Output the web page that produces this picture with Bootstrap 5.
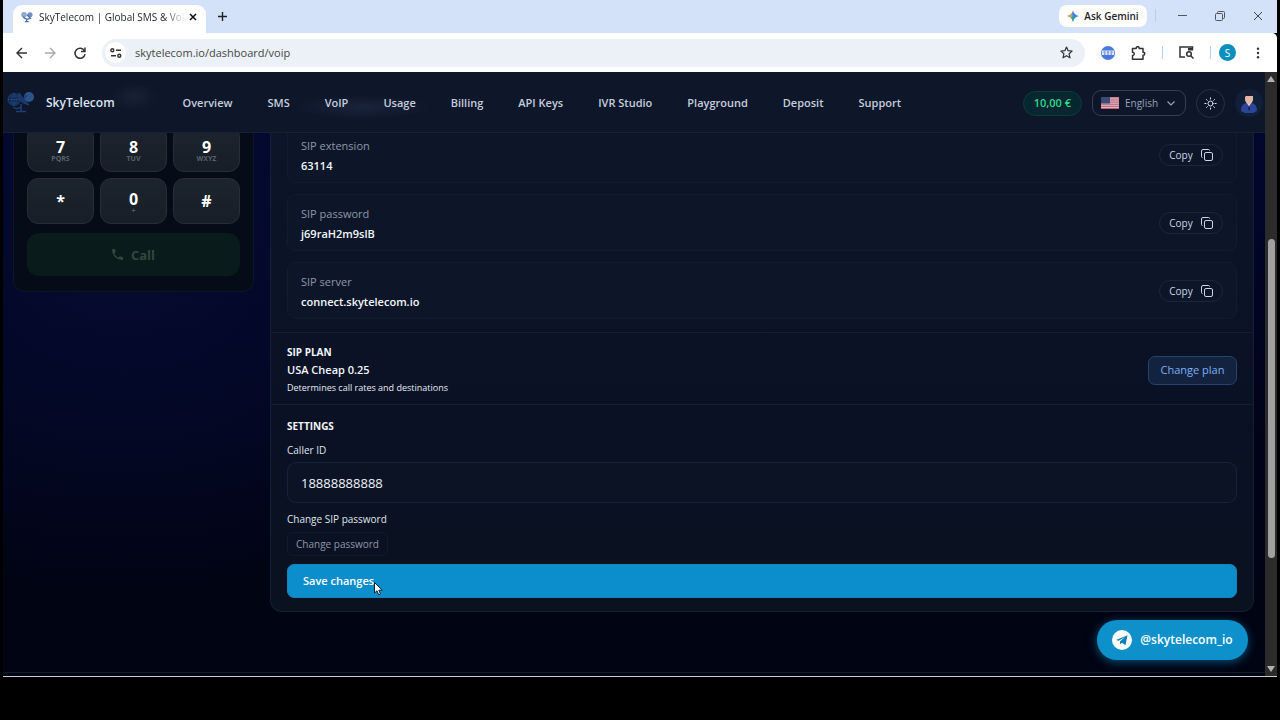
<!DOCTYPE html>
<html lang="en" data-bs-theme="dark">
<head>
<meta charset="utf-8">
<meta name="viewport" content="width=device-width, initial-scale=1">
<title>SkyTelecom | Global SMS &amp; VoIP</title>
<link href="https://cdn.jsdelivr.net/npm/bootstrap@5.3.0/dist/css/bootstrap.min.css" rel="stylesheet">
<style>
  body { background: #000; font-family: "Open Sans", "Noto Sans", sans-serif; font-size: 11px; line-height: 18px; color: #e6ebf5; padding: 0 3px 43px; }
  button, input, select { font-family: inherit; }
  svg { display: block; flex: none; }
  .plain { background: none; border: 0; padding: 0; color: inherit; display: flex; align-items: center; justify-content: center; }

  /* browser window */
  .window { border-bottom: 1px solid #c9cbd0; background: #000; }
  .tabstrip { background: #d3e2f9; height: 33px; color: #1f2328; padding: 5px 14px 0 10px; }
  .tab { background: #fff; border-radius: 9px 9px 0 0; width: 193px; height: 28px; font-size: 10px; padding: 0 9px 4px 8px; }
  .tab-title { white-space: nowrap; margin: 0 auto 0 6px; -webkit-mask-image: linear-gradient(90deg, #000 86%, transparent); mask-image: linear-gradient(90deg, #000 86%, transparent); }
  .new-tab { margin: 7px 0 0 12px; }
  .gemini { background: #fff; border-radius: 8px; height: 22px; width: 88px; font-size: 10px; font-weight: 600; gap: 5px; }
  .sep { width: 1px; height: 13px; background: #b4cdf3; }
  .win-controls { gap: 28px; margin: 6px 0 0 22px; }
  .toolbar { background: #fff; height: 39px; color: #30343a; padding: 0 13px 0 12px; border-radius: 0 5px 0 0; }
  .address { background: #ebf1f7; border-radius: 14px; height: 28px; margin: 0 16px 0 15px; padding: 0 12px 0 3px; }
  .site-info { background: #fff; border-radius: 50%; width: 21px; height: 21px; }
  .address input { border: 0; background: none; color: #474747; font-size: 11px; padding: 0 0 0 9px; outline: 0; }
  .profile { background: #0b8fbf; color: #fff; border-radius: 50%; width: 17px; height: 17px; font-size: 10px; }

  /* dashboard */
  .page { background: radial-gradient(ellipse 420px 330px at 120px 190px, #050b30, rgba(2, 5, 30, 0) 100%), linear-gradient(#020733, #01041c 50%, #010413 85%); overflow: hidden; }
  .topbar { height: 61px; padding: 2px 2px 0 4px; z-index: 2; border-bottom: 1px solid #172038;
    background: radial-gradient(ellipse 24px 14px at 131px 25px, #182135, transparent), radial-gradient(ellipse 70px 12px at 360px 35px, #19233a, transparent), #0e162a; }
  .topbar .navbar-brand { font-size: 12px; font-weight: 600; color: #dbe3f0; gap: 11px; margin: 0; padding: 0; }
  .topbar .navbar-nav { gap: 35px; margin-left: 68px; }
  .topbar .navbar-nav .nav-link { font-weight: 600; color: #c5cedd; padding: 0; white-space: nowrap; }
  .topbar-tools { gap: 10px; }
  .balance { background: #06272f; border: 1px solid #0b3d39; color: #2fd88c; border-radius: 13px; font-weight: 600; height: 25px; padding: 0 10px; }
  .lang { border: 1px solid #343e52; border-radius: 9px; height: 26px; width: 94px; padding: 0 10px 0 8px; gap: 6px; }
  .lang select { appearance: none; border: 0; background: none; color: #98a3b6; font-size: 10px; padding: 0; width: 36px; outline: 0; }
  .lang option { background: #0e162a; }
  .theme { width: 29px; height: 29px; border: 1px solid #263047; border-radius: 50%; color: #dbe3f0; }
  .avatar { width: 28px; height: 28px; border-radius: 50%; background: #10203a; }

  main { margin-top: -7px; padding: 0 11px 61px 10px; gap: 16px; }
  .dialer { width: 241px; background: #050c17; border: 1px solid #0d1627; border-top: 0; border-radius: 0 0 12px 12px; padding: 0 13px 15px; }
  .keypad { display: grid; grid-template-columns: repeat(3, 1fr); gap: 6px; }
  .key { background: linear-gradient(#1c242d, #171e27); border: 1px solid #272e37; border-radius: 11px; height: 46px; color: #fff; font-size: 16px; font-weight: 700; line-height: 16px; padding: 0; }
  .key-letters { padding-top: 3px; }
  .key small { display: block; font-size: 7px; line-height: 8px; color: #58616b; }
  .call { background: #091c1b; border: 0; color: #37453f; border-radius: 12px; height: 43px; margin-top: 9px; font-size: 13px; font-weight: 700; }

  .panel { background: linear-gradient(#0c1529, #0a1124 60%, #0a111f); border: 1px solid #151f37; border-top: 0; border-radius: 0 0 12px 12px; }
  .fields { padding: 0 16px 13px; gap: 11px; }
  .field { background: #0d1628; border: 1px solid #121b2f; border-radius: 8px; height: 57px; padding: 0 13px; line-height: 20px; }
  .field-text { padding-top: 2px; }
  .field-name { color: #8c96aa; }
  .field-value { font-weight: 600; color: #f3f6fb; }
  .copy { border: 1px solid #1c2639; border-radius: 11px; background: none; color: #ccd5e4; height: 22px; width: 64px; font-size: 10px; padding: 0; gap: 8px; }
  .part { border-top: 1px solid #141d33; padding: 10px 16px 7px; }
  .part h2 { font-size: 10px; line-height: 18px; font-weight: 700; margin: 0; color: #f3f6fb; }
  .plan-name { font-weight: 600; color: #f3f6fb; }
  .plan-note { font-size: 9px; }
  .btn-plan { background: #13233f; border: 1px solid #29426b; color: #7fb0f2; border-radius: 7px; height: 29px; width: 89px; font-size: 11px; padding: 0; }
  .settings { padding: 12px 16px 13px; }
  .settings label, .settings .caption { font-size: 10px; line-height: 18px; color: #dfe5ef; margin-top: 7px; }
  .settings label { margin-top: 6px; }
  .settings .form-control { background: #0b1325; border: 1px solid #17233a; border-radius: 9px; height: 41px; margin-top: 3px; padding: 0 13px; font-size: 13px; color: #f0f4fa; }
  .btn-ghost { background: #0a1122; border: 1px solid #121b2c; border-radius: 7px; color: #8d97a8; height: 24px; width: 101px; font-size: 10px; padding: 0; }
  .btn-save { background: #0c8ecd; border: 1px solid #1583b9; border-radius: 7px; color: #fff; font-weight: 600; font-size: 11px; height: 34px; padding: 0 15px; text-align: left; }
  .pointer { position: absolute; left: 100%; top: 9px; }
  .telegram { position: absolute; right: 17px; bottom: 16px; height: 40px; width: 151px; background: #0e90cb; color: #fff; border-radius: 20px; font-size: 12px; font-weight: 600; gap: 8px; box-shadow: 0 2px 10px rgba(14, 144, 203, .55); text-decoration: none; }
  .page-foot { position: absolute; left: 0; right: 0; bottom: 3px; border-top: 1px solid #10182b; }

  .scrollbar { width: 12px; background: #2b2b2b; padding: 4px 0; }
  .thumb { flex: 320 0 0; width: 7px; border-radius: 4px; background: #a0a0a0; }
  .before { flex: 157 0 0; }
  .after { flex: 108 0 0; }
</style>
</head>
<body class="d-flex flex-column min-vh-100">
<div class="window flex-grow-1 d-flex flex-column">

  <div class="tabstrip d-flex align-items-start">
    <div class="tab d-flex align-items-center">
      <svg width="12" height="12" viewBox="0 0 28 26"><circle cx="7" cy="8" r="6.500" fill="#8fa6cf"/><circle cx="21" cy="8" r="6" fill="#6f8fc6"/><path d="M5 12q5 9 17 4l-8-8M13 17v7M9 24h9" fill="none" stroke="#4c6ea9" stroke-width="3"/></svg>
      <span class="tab-title">SkyTelecom | Global SMS &amp; VoI</span>
      <button class="plain" aria-label="Close tab"><svg width="8" height="8" viewBox="0 0 8 8" stroke="#111" stroke-width="1.500"><path d="M1 1l6 6M7 1l-6 6"/></svg></button>
    </div>
    <button class="plain new-tab" aria-label="New tab"><svg width="9" height="9" viewBox="0 0 9 9" stroke="#222" stroke-width="1.400"><path d="M4.500 0v9M0 4.500h9"/></svg></button>
    <button class="plain gemini ms-auto">
      <svg width="12" height="12" viewBox="0 0 12 12"><defs><linearGradient id="gem" x1="0" y1="0" x2="1" y2="1"><stop offset="0" stop-color="#e4484b"/><stop offset=".3" stop-color="#8a83c4"/><stop offset=".5" stop-color="#3a83ee"/><stop offset="1" stop-color="#2b7de9"/></linearGradient></defs><path d="M6 0q.9 5.100 6 6-5.100.9-6 6-.9-5.100-6-6 5.100-.9 6-6z" fill="url(#gem)"/><path d="M0 6q2.800-.5 4.300-1.900L6 6 4.500 8Q3.200 6.700 0 6z" fill="#e5b421" opacity=".8"/><path d="M4.300 8l1.700-2 .6 3L6 12Q5.500 9.500 4.300 8z" fill="#2fae65"/></svg>
      <span>Ask Gemini</span></button>
    <span class="sep ms-2 mt-1"></span>
    <div class="win-controls d-flex align-items-center">
      <button class="plain" aria-label="Minimize"><svg width="9" height="10" viewBox="0 0 9 10" stroke="#555"><path d="M0 4.500h9"/></svg></button>
      <button class="plain" aria-label="Restore"><svg width="10" height="10" viewBox="0 0 10 10" fill="none" stroke="#555"><rect x=".5" y="2.500" width="7" height="7" rx="1"/><path d="M2.500 2V1.500q0-1 1-1h5q1 0 1 1v5q0 1-1 1H8"/></svg></button>
      <button class="plain" aria-label="Close window"><svg width="10" height="10" viewBox="0 0 10 10" stroke="#444"><path d="M1 1l8 8M9 1l-8 8"/></svg></button>
    </div>
  </div>

  <div class="toolbar d-flex align-items-center">
    <button class="plain" aria-label="Back"><svg width="13" height="12" viewBox="0 0 13 12" fill="none" stroke="#333" stroke-width="1.400"><path d="M12 6H2M7 1L2 6l5 5"/></svg></button>
    <button class="plain ms-3" aria-label="Forward"><svg width="13" height="12" viewBox="0 0 13 12" fill="none" stroke="#aaa" stroke-width="1.400"><path d="M1 6h10M6 1l5 5-5 5"/></svg></button>
    <button class="plain ms-3" aria-label="Reload"><svg width="14" height="14" viewBox="0 0 14 14" fill="none" stroke="#333" stroke-width="1.500"><path d="M11.500 5A5 5 0 1 0 12 8"/><path d="M12 1.500V5.500H8"/></svg></button>
    <div class="address flex-grow-1 d-flex align-items-center">
      <button class="plain site-info" aria-label="Site information"><svg width="12" height="10" viewBox="0 0 12 10" fill="none" stroke="#333" stroke-width="1.400"><circle cx="2.300" cy="2.300" r="1.500"/><path d="M6 2.300h5M1 7.700h5"/><circle cx="9.300" cy="7.700" r="1.500"/></svg></button>
      <input class="flex-grow-1" type="text" value="skytelecom.io/dashboard/voip" aria-label="Address">
      <button class="plain" aria-label="Bookmark"><svg width="13" height="13" viewBox="0 0 13 13" fill="none" stroke="#333" stroke-width="1.200" stroke-linejoin="round"><path d="M6.500 1l1.600 3.700 4 .4-3 2.700.9 4-3.500-2.100L3 11.800l.9-4-3-2.700 4-.4z"/></svg></button>
    </div>
    <button class="plain" aria-label="Extension"><svg width="14" height="14" viewBox="0 0 14 14"><circle cx="7" cy="7" r="7" fill="#4a7bdc"/><path d="M1 4.500h12v4.500H1z" fill="#dce7fb"/><path d="M2.500 6h2M6 6h2M9.500 6h2M3 8h1.500M6.200 8h1.500M9.500 8H11" stroke="#3763bd" stroke-width="1.200"/></svg></button>
    <button class="plain ms-3" aria-label="Extensions"><svg width="15" height="14" viewBox="0 0 15 14" fill="none" stroke="#333" stroke-width="1.500" stroke-linejoin="round"><path d="M1.500 2.500h3.700q-.2-1.800 1.500-1.800t1.500 1.800H12v3.700q1.800 0 1.800 1.500T12 9.200v4H1.500V9.500Q3.300 9.300 3.300 7.800T1.500 6.200z"/></svg></button>
    <span class="sep ms-3"></span>
    <button class="plain ms-3" aria-label="Search in page"><svg width="15" height="13" viewBox="0 0 15 13" fill="none" stroke="#333" stroke-width="1.500"><path d="M6 11H1V1h12.500v3"/><path d="M9 2h5v2.500H9z" fill="#333" stroke="none"/><circle cx="10" cy="8" r="2.300"/><path d="M11.700 9.700l2.800 2.800"/></svg></button>
    <span class="sep ms-3"></span>
    <button class="plain profile ms-2 me-2" aria-label="Profile">S</button>
    <button class="plain ms-2" aria-label="Menu"><svg width="12" height="12" viewBox="0 0 12 12" fill="#333"><circle cx="6" cy="1.800" r="1.200"/><circle cx="6" cy="6" r="1.200"/><circle cx="6" cy="10.200" r="1.200"/></svg></button>
  </div>

  <div class="flex-grow-1 d-flex">
    <div class="page flex-grow-1 position-relative">
      <nav class="navbar navbar-expand topbar sticky-top flex-nowrap">
        <a class="navbar-brand d-flex align-items-center" href="#">
          <svg width="28" height="24" viewBox="0 0 28 24" fill="none" stroke="#1e3f75"><circle cx="7" cy="8.500" r="6" fill="#10274f"/><path d="M1 8.500h12M7 2.500v12M2.500 5h9M2.500 12h9M7 2.500q-5 6 0 12M7 2.500q5 6 0 12"/><circle cx="22" cy="6" r="5" fill="#2d5488" stroke="none"/><path d="M12 2q-3 9 10 12L12 2z" fill="#1a3768"/><path d="M17 8l3-4M14 13v7M9 20.500h10M6 16q4 3 8 0" stroke-width="1.500"/></svg>
          <span>SkyTelecom</span></a>
        <div class="navbar-nav">
          <a class="nav-link" href="#">Overview</a><a class="nav-link" href="#">SMS</a><a class="nav-link" href="#">VoIP</a><a class="nav-link" href="#">Usage</a><a class="nav-link" href="#">Billing</a><a class="nav-link" href="#">API Keys</a><a class="nav-link" href="#">IVR Studio</a><a class="nav-link" href="#">Playground</a><a class="nav-link" href="#">Deposit</a><a class="nav-link" href="#">Support</a>
        </div>
        <div class="topbar-tools d-flex align-items-center ms-auto">
          <span class="balance d-flex align-items-center text-nowrap">10,00 €</span>
          <label class="lang d-flex align-items-center">
            <svg width="18" height="12" viewBox="0 0 18 12"><rect width="18" height="12" rx="1" fill="#d9c3cc"/><path d="M0 .9h18M0 3h18M0 5.100h18M0 7.200h18M0 9.300h18M0 11.400h18" stroke="#c3566a"/><path d="M0 0h9v6.500H0z" fill="#3c4c74"/></svg>
            <select aria-label="Language"><option>English</option></select>
            <svg class="ms-auto" width="8" height="5" viewBox="0 0 8 5" fill="none" stroke="#98a3b6" stroke-width="1.200"><path d="M.5.5L4 4 7.500.5"/></svg>
          </label>
          <button class="plain theme" aria-label="Toggle theme"><svg width="13" height="13" viewBox="0 0 13 13" fill="none" stroke="currentColor" stroke-linecap="round"><circle cx="6.500" cy="6.500" r="2.500"/><path d="M6.500.8v1.200M6.500 11v1.200M.8 6.500H2M11 6.500h1.200M2.500 2.500l.8.8M9.700 9.700l.8.8M10.500 2.500l-.8.8M3.300 9.700l-.8.8"/></svg></button>
          <button class="plain avatar" aria-label="Account"><svg width="18" height="22" viewBox="0 0 18 22"><path d="M1 19q0-7 5-8h6q5 1 5 8l-4 2H5z" fill="#2c4596"/><path d="M6.500 10h5L9 15z" fill="#dfe4f5"/><path d="M9 12l1 5-1 2-1-2z" fill="#17234d"/><path d="M5 4h8v4q-1 4-4 4T5 8z" fill="#e0b9a5"/><path d="M4 6Q3 0 9 0.500 15 0 14 6l-1-2H6z" fill="#1a1c2b"/></svg></button>
        </div>
      </nav>

      <main class="d-flex align-items-start">
        <section class="dialer flex-shrink-0" aria-label="Dialer">
          <div class="keypad">
            <button class="key key-letters">7<small>PQRS</small></button>
            <button class="key key-letters">8<small>TUV</small></button>
            <button class="key key-letters">9<small>WXYZ</small></button>
            <button class="key">*</button>
            <button class="key key-letters">0<small>+</small></button>
            <button class="key">#</button>
          </div>
          <button class="call w-100 d-flex align-items-center justify-content-center gap-2" disabled>
            <svg width="11" height="11" viewBox="0 0 11 11" fill="currentColor"><path d="M0 .6Q0 0 .6 0h2q.6 0 .6.600 0 1.100.4 2.100.1.400-.1.600L2.200 4.700q1.300 2.600 4.100 4.100l1.300-1.300q.3-.3.700-.1 1 .3 2.100.4.600 0 .6.600v2q0 .6-.6.600Q6 11 3 8 0 5 0 .6z"/></svg>
            <span>Call</span></button>
        </section>

        <section class="panel flex-grow-1">
          <div class="fields d-flex flex-column">
            <div class="field d-flex align-items-center justify-content-between">
              <div class="field-text"><div class="field-name">SIP extension</div><div class="field-value">63114</div></div>
              <button class="copy d-flex align-items-center justify-content-center">Copy <svg width="12" height="12" viewBox="0 0 12 12" fill="none" stroke="currentColor"><rect x="3.500" y="3.500" width="8" height="8" rx="1.500"/><path d="M1.500 8.500q-1 0-1-1V2Q.5.500 2 .5h5.500q1 0 1 1"/></svg></button>
            </div>
            <div class="field d-flex align-items-center justify-content-between">
              <div class="field-text"><div class="field-name">SIP password</div><div class="field-value">j69raH2m9slB</div></div>
              <button class="copy d-flex align-items-center justify-content-center">Copy <svg width="12" height="12" viewBox="0 0 12 12" fill="none" stroke="currentColor"><rect x="3.500" y="3.500" width="8" height="8" rx="1.500"/><path d="M1.500 8.500q-1 0-1-1V2Q.5.500 2 .5h5.500q1 0 1 1"/></svg></button>
            </div>
            <div class="field d-flex align-items-center justify-content-between">
              <div class="field-text"><div class="field-name">SIP server</div><div class="field-value">connect.skytelecom.io</div></div>
              <button class="copy d-flex align-items-center justify-content-center">Copy <svg width="12" height="12" viewBox="0 0 12 12" fill="none" stroke="currentColor"><rect x="3.500" y="3.500" width="8" height="8" rx="1.500"/><path d="M1.500 8.500q-1 0-1-1V2Q.5.500 2 .5h5.500q1 0 1 1"/></svg></button>
            </div>
          </div>
          <div class="part d-flex align-items-center justify-content-between">
            <div>
              <h2>SIP PLAN</h2>
              <div class="plan-name">USA Cheap 0.25</div>
              <div class="plan-note">Determines call rates and destinations</div>
            </div>
            <button class="btn btn-plan">Change plan</button>
          </div>
          <form class="part settings d-flex flex-column">
            <h2>SETTINGS</h2>
            <label for="caller">Caller ID</label>
            <input id="caller" class="form-control" type="text" value="18888888888">
            <div class="caption">Change SIP password</div>
            <button type="button" class="btn btn-ghost align-self-start mt-1">Change password</button>
            <button type="button" class="btn btn-save mt-2"><span class="position-relative">Save changes<svg class="pointer" width="9" height="14" viewBox="0 0 9 14"><path d="M.5.500v10.500l2.500-2.200 1.700 4 1.800-.8-1.700-3.800h3.500z" fill="#fff" stroke="#123"/></svg></span></button>
          </form>
        </section>
      </main>
      <div class="page-foot"></div>
      <a class="telegram d-flex align-items-center justify-content-center" href="#">
        <svg width="20" height="20" viewBox="0 0 20 20"><circle cx="10" cy="10" r="10" fill="#fff"/><path d="M4 10l11.500-4.700-2 10-3.500-2.600-1.700 1.700-.4-3 5.200-4.700-6.300 4.100z" fill="#0e82b8"/></svg>
        <span>@skytelecom_io</span></a>
    </div>
    <div class="scrollbar d-flex flex-column align-items-center flex-shrink-0" aria-hidden="true">
      <svg width="8" height="6" viewBox="0 0 8 6" fill="#b0b0b0"><path d="M4 0l4 6H0z"/></svg>
      <div class="before"></div><div class="thumb"></div><div class="after"></div>
      <svg width="8" height="6" viewBox="0 0 8 6" fill="#b0b0b0"><path d="M4 6l4-6H0z"/></svg>
    </div>
  </div>
</div>
<script src="https://cdn.jsdelivr.net/npm/bootstrap@5.3.0/dist/js/bootstrap.bundle.min.js"></script>
</body>
</html>
